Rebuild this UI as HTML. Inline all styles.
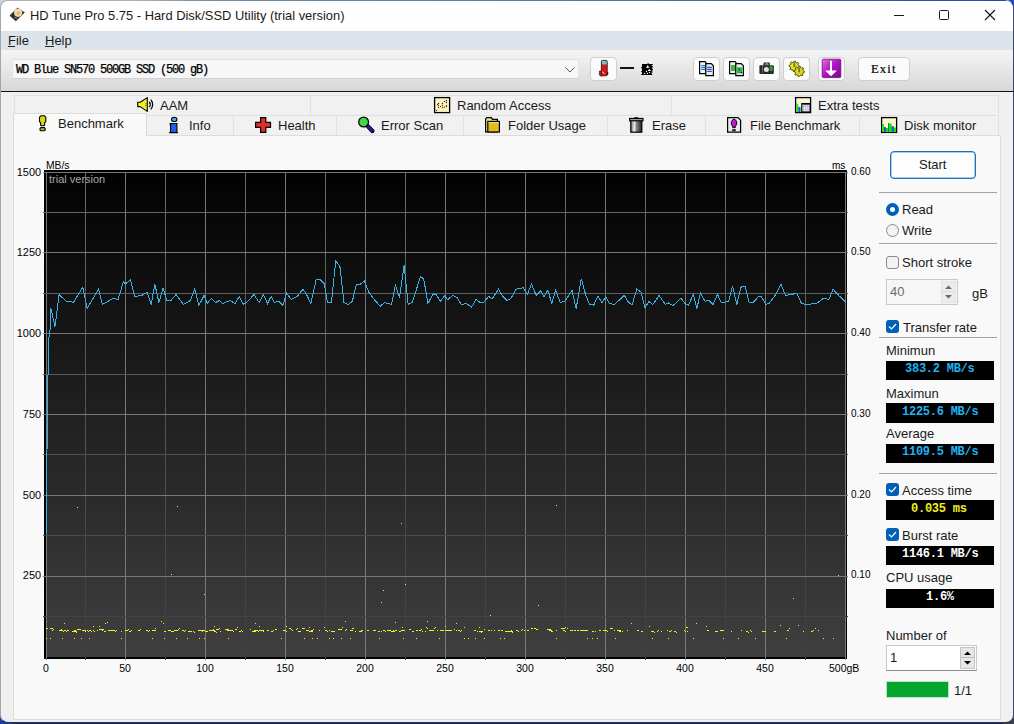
<!DOCTYPE html>
<html><head><meta charset="utf-8">
<style>
*{margin:0;padding:0;box-sizing:border-box}
html,body{width:1014px;height:724px;overflow:hidden}
body{position:relative;font-family:"Liberation Sans",sans-serif;color:#000;background:#1d2a55}
.a{position:absolute}
.t{position:absolute;white-space:nowrap;font-size:13px;line-height:15px;color:#1a1a1a}
#win{position:absolute;left:0;top:0;width:1014px;height:723px;background:#f0f0f0;border-radius:8px;overflow:hidden;border:1px solid #a4a6aa;border-right-color:#3c4666;border-bottom-color:#22305a}
.tab{position:absolute;background:#f1f1f1;border:1px solid #e0e0e0;border-bottom:none}
.tbtn{position:absolute;top:57px;height:24px;border:1px solid #cfcfcf;border-radius:4px;background:#fbfbfb}
.lbox{position:absolute;left:886px;width:108px;background:#000}
.mono{position:absolute;font-family:"Liberation Mono",monospace;font-weight:bold;white-space:nowrap;font-size:12px;line-height:12px;letter-spacing:-0.25px}
.sep{position:absolute;left:879px;width:118px;height:1px;background:#a3a3a3}
.cb{position:absolute;left:886px;width:13px;height:13px;border-radius:3px;background:#005fb8}
.ax{position:absolute;font-size:10.5px;line-height:12px;color:#000;white-space:nowrap}
</style></head><body>
<div class="a" style="left:0;top:0;width:12px;height:12px;background:#cfd1d4"></div>
<div class="a" style="right:0;top:0;width:12px;height:12px;background:#1f44c8"></div>
<div class="a" style="left:0;bottom:0;width:12px;height:12px;background:#1c3aa8"></div>
<div class="a" style="right:0;bottom:0;width:12px;height:12px;background:#3a3f4a"></div>
<div id="win">
 <div class="a" style="left:-1px;top:-1px;width:1014px;height:31px;background:#fefefe"></div>
 <div class="a" style="left:-1px;top:30px;width:1014px;height:19px;background:#dde3eb"></div>
 <div class="a" style="left:-1px;top:49px;width:1014px;height:41px;background:linear-gradient(#f5f5f5,#d7d7d7)"></div>
 <div class="a" style="left:-1px;top:90px;width:1014px;height:1px;background:#111"></div>
</div>

<!-- title -->
<div class="a" style="left:8px;top:0;width:998px;height:1px;background:linear-gradient(90deg,#aeb0b2 0%,#aeb0b2 13%,#6f8ea6 20%,#5a7a9e 55%,#2a48a4 100%)"></div>
<div class="t" style="left:30px;top:8px;font-size:12.9px">HD Tune Pro 5.75 - Hard Disk/SSD Utility (trial version)</div>
<!-- window controls -->
<div class="a" style="left:894px;top:15px;width:10px;height:1px;background:#1a1a1a"></div>
<div class="a" style="left:939px;top:10px;width:10px;height:10px;border:1px solid #1a1a1a;border-radius:1.5px"></div>
<svg class="a" style="left:984px;top:9px" width="12" height="12" viewBox="0 0 12 12"><path d="M1,1 L11,11 M11,1 L1,11" stroke="#111" stroke-width="1.1"/></svg>

<!-- menu -->
<div class="t" style="left:8px;top:33px">File</div>
<div class="a" style="left:8px;top:46px;width:7px;height:1px;background:#222"></div>
<div class="t" style="left:45px;top:33px">Help</div>
<div class="a" style="left:45px;top:46px;width:9px;height:1px;background:#222"></div>

<!-- combobox -->
<div class="a" style="left:12px;top:59px;width:567px;height:20px;background:#f7f7f7;border:1px solid #e3e3e3;border-bottom-color:#d0d0d0"></div>
<div class="a" style="left:16px;top:63px;font-family:'Liberation Mono',monospace;font-size:12px;line-height:14px;letter-spacing:-1.2px;white-space:nowrap;color:#000;-webkit-text-stroke:0.25px #000">WD Blue SN570 500GB SSD (500 gB)</div>
<svg class="a" style="left:564px;top:66px" width="12" height="8" viewBox="0 0 12 8"><path d="M1.5,1.5 L6,6 L10.5,1.5" stroke="#555" stroke-width="1" fill="none"/></svg>

<!-- toolbar buttons -->
<div class="tbtn" style="left:590px;width:27px"></div>
<div class="a" style="left:620px;top:67px;width:14px;height:2px;background:#111"></div>
<div class="tbtn" style="left:693px;width:27px"></div>
<div class="tbtn" style="left:723px;width:27px"></div>
<div class="tbtn" style="left:753px;width:27px"></div>
<div class="tbtn" style="left:783px;width:27px"></div>
<div class="tbtn" style="left:818px;width:27px"></div>
<div class="tbtn" style="left:858px;width:52px"></div>
<div class="a" style="left:871px;top:62px;font-family:'Liberation Serif',serif;font-size:12.5px;line-height:14px;letter-spacing:1.2px;color:#000;-webkit-text-stroke:0.2px #000">Exit</div>

<!-- tabs row 1 -->
<div class="tab" style="left:14px;top:95px;width:297px;height:19px"></div>
<div class="tab" style="left:310px;top:95px;width:362px;height:19px"></div>
<div class="tab" style="left:671px;top:95px;width:328px;height:19px"></div>
<div class="t" style="left:160px;top:98px">AAM</div>
<div class="t" style="left:457px;top:98px">Random Access</div>
<div class="t" style="left:818px;top:98px">Extra tests</div>
<!-- tabs row 2 -->
<div class="tab" style="left:146px;top:115px;width:88px;height:21px"></div>
<div class="tab" style="left:233px;top:115px;width:104px;height:21px"></div>
<div class="tab" style="left:336px;top:115px;width:128px;height:21px"></div>
<div class="tab" style="left:463px;top:115px;width:145px;height:21px"></div>
<div class="tab" style="left:607px;top:115px;width:99px;height:21px"></div>
<div class="tab" style="left:705px;top:115px;width:155px;height:21px"></div>
<div class="tab" style="left:859px;top:115px;width:140px;height:21px"></div>
<!-- page -->
<div class="a" style="left:13px;top:135px;width:988px;height:585px;background:#f9f9f9;border:1px solid #dcdcdc"></div>
<!-- selected tab -->
<div class="a" style="left:13px;top:113px;width:134px;height:24px;background:#f9f9f9;border:1px solid #dcdcdc;border-bottom:none"></div>
<div class="t" style="left:58px;top:116px">Benchmark</div>
<div class="t" style="left:189px;top:118px">Info</div>
<div class="t" style="left:278px;top:118px">Health</div>
<div class="t" style="left:381px;top:118px">Error Scan</div>
<div class="t" style="left:508px;top:118px">Folder Usage</div>
<div class="t" style="left:652px;top:118px">Erase</div>
<div class="t" style="left:750px;top:118px">File Benchmark</div>
<div class="t" style="left:904px;top:118px">Disk monitor</div>

<!-- chart -->
<svg class="a" style="left:0;top:0" width="1014" height="724" viewBox="0 0 1014 724">
 <defs><linearGradient id="cg" x1="0" y1="0" x2="0" y2="1"><stop offset="0" stop-color="#020202"/><stop offset="1" stop-color="#3f3f3f"/></linearGradient><linearGradient id="mg" gradientUnits="userSpaceOnUse" x1="0" y1="172" x2="0" y2="657"><stop offset="0" stop-color="#6a6a6a"/><stop offset="1" stop-color="#3f3f3f"/></linearGradient></defs>
 <rect x="44" y="170" width="803" height="489" fill="#000"/>
 <rect x="46" y="172" width="800" height="485" fill="url(#cg)"/>
 <g stroke-width="1" shape-rendering="crispEdges" id="grid"><line x1="46.5" y1="172" x2="46.5" y2="660" stroke="#787878"/><line x1="85.5" y1="172" x2="85.5" y2="660" stroke="url(#mg)"/><line x1="125.5" y1="172" x2="125.5" y2="660" stroke="#787878"/><line x1="165.5" y1="172" x2="165.5" y2="660" stroke="url(#mg)"/><line x1="205.5" y1="172" x2="205.5" y2="660" stroke="#787878"/><line x1="245.5" y1="172" x2="245.5" y2="660" stroke="url(#mg)"/><line x1="285.5" y1="172" x2="285.5" y2="660" stroke="#787878"/><line x1="325.5" y1="172" x2="325.5" y2="660" stroke="url(#mg)"/><line x1="365.5" y1="172" x2="365.5" y2="660" stroke="#787878"/><line x1="405.5" y1="172" x2="405.5" y2="660" stroke="url(#mg)"/><line x1="445.5" y1="172" x2="445.5" y2="660" stroke="#787878"/><line x1="485.5" y1="172" x2="485.5" y2="660" stroke="url(#mg)"/><line x1="525.5" y1="172" x2="525.5" y2="660" stroke="#787878"/><line x1="565.5" y1="172" x2="565.5" y2="660" stroke="url(#mg)"/><line x1="605.5" y1="172" x2="605.5" y2="660" stroke="#787878"/><line x1="645.5" y1="172" x2="645.5" y2="660" stroke="url(#mg)"/><line x1="685.5" y1="172" x2="685.5" y2="660" stroke="#787878"/><line x1="725.5" y1="172" x2="725.5" y2="660" stroke="url(#mg)"/><line x1="765.5" y1="172" x2="765.5" y2="660" stroke="#787878"/><line x1="805.5" y1="172" x2="805.5" y2="660" stroke="url(#mg)"/><line x1="845.5" y1="172" x2="845.5" y2="660" stroke="#787878"/><line x1="43" y1="172.5" x2="848" y2="172.5" stroke="#787878"/><line x1="43" y1="212.5" x2="848" y2="212.5" stroke="#666666"/><line x1="43" y1="252.5" x2="848" y2="252.5" stroke="#787878"/><line x1="43" y1="293.5" x2="848" y2="293.5" stroke="#5f5f5f"/><line x1="43" y1="333.5" x2="848" y2="333.5" stroke="#787878"/><line x1="43" y1="374.5" x2="848" y2="374.5" stroke="#585858"/><line x1="43" y1="414.5" x2="848" y2="414.5" stroke="#787878"/><line x1="43" y1="454.5" x2="848" y2="454.5" stroke="#515151"/><line x1="43" y1="495.5" x2="848" y2="495.5" stroke="#787878"/><line x1="43" y1="535.5" x2="848" y2="535.5" stroke="#4a4a4a"/><line x1="43" y1="576.5" x2="848" y2="576.5" stroke="#787878"/><line x1="43" y1="616.5" x2="848" y2="616.5" stroke="#434343"/></g>
 <path d="M45.8,533.0 L46.5,450.0 L48.0,338.0 L49.3,335.0 L50.4,308.0 L54.5,326.0 L58.6,294.0 L65.9,301.0 L73.0,301.7 L82.4,286.6 L86.6,308.0 L98.0,288.7 L102.0,304.0 L112.5,298.0 L117.6,299.0 L122.8,281.4 L124.9,283.5 L130.0,279.3 L134.2,296.0 L141.4,294.9 L146.6,291.8 L150.8,304.0 L154.3,283.5 L158.4,302.0 L162.6,287.6 L166.3,300.0 L170.4,300.0 L175.6,294.0 L182.9,304.0 L190.0,300.0 L194.2,288.6 L198.4,305.0 L203.6,294.9 L206.7,303.0 L210.8,298.0 L215.0,302.0 L219.0,300.0 L222.2,303.0 L229.4,300.0 L234.6,303.0 L238.8,296.0 L243.0,304.0 L247.0,301.0 L253.5,294.0 L258.6,302.0 L262.8,294.0 L267.0,303.0 L270.6,296.0 L274.0,302.0 L278.3,300.5 L282.4,305.0 L286.0,292.8 L290.7,299.0 L297.0,295.5 L302.5,288.6 L306.0,294.0 L310.4,303.0 L315.6,279.3 L319.7,279.3 L323.8,283.5 L327.0,302.0 L331.0,302.0 L335.2,260.3 L339.4,266.0 L343.5,302.0 L347.7,304.0 L351.8,301.0 L356.0,283.5 L360.0,283.5 L363.8,280.4 L368.4,291.8 L374.6,300.0 L379.8,305.8 L383.9,302.0 L391.0,304.0 L394.9,285.0 L399.0,297.0 L403.6,264.8 L407.7,304.0 L411.8,302.0 L420.0,276.0 L423.2,278.3 L427.4,303.0 L432.5,293.4 L435.7,294.0 L439.8,301.0 L444.0,295.5 L447.2,299.0 L452.4,295.0 L456.6,297.0 L460.7,304.0 L465.9,303.0 L471.0,306.7 L475.6,299.0 L480.4,302.5 L483.5,301.7 L488.0,296.0 L491.8,298.0 L498.0,288.7 L502.0,295.5 L506.3,300.0 L510.4,298.0 L515.6,288.7 L522.8,287.2 L527.0,293.8 L531.0,283.5 L535.7,294.9 L540.4,290.0 L543.5,296.3 L547.2,289.7 L551.4,303.0 L555.0,289.7 L559.7,302.0 L564.2,301.0 L571.5,289.7 L575.6,308.3 L580.8,278.3 L585.0,293.8 L589.0,304.0 L593.2,304.6 L597.4,295.5 L601.5,302.5 L605.2,296.0 L608.7,303.0 L614.0,304.0 L623.8,294.9 L627.4,301.0 L631.5,304.6 L636.3,288.7 L640.4,291.3 L644.6,307.3 L648.3,301.0 L652.4,304.0 L658.6,295.0 L664.8,304.0 L668.0,302.5 L672.7,305.0 L680.4,297.6 L684.5,303.0 L688.0,304.6 L692.8,294.0 L696.3,308.0 L700.0,292.8 L704.6,301.0 L708.3,299.6 L712.5,304.0 L717.0,294.0 L720.7,302.0 L728.0,301.0 L732.1,285.5 L736.3,304.0 L740.4,286.6 L744.6,286.0 L748.7,302.0 L752.8,302.0 L758.0,296.0 L761.0,296.3 L765.3,303.8 L768.4,303.0 L774.6,295.0 L780.4,283.5 L785.0,295.0 L790.7,294.0 L796.3,292.8 L801.0,303.0 L805.6,304.0 L816.0,303.0 L823.2,297.6 L828.4,299.0 L832.5,288.7 L838.8,295.5 L845.0,301.7" fill="none" stroke="#3cb0e2" stroke-width="1" shape-rendering="crispEdges" transform="translate(0.5,0.5)"/>
 <g fill="#f2f222" shape-rendering="crispEdges"><rect x="46" y="628" width="2" height="1"/><rect x="50" y="628" width="3" height="1"/><rect x="52" y="630" width="1" height="1"/><rect x="53" y="629" width="1" height="1"/><rect x="59" y="630" width="2" height="1"/><rect x="61" y="629" width="1" height="1"/><rect x="61" y="630" width="2" height="1"/><rect x="63" y="631" width="1" height="1"/><rect x="64" y="630" width="2" height="1"/><rect x="66" y="631" width="1" height="1"/><rect x="67" y="630" width="2" height="1"/><rect x="72" y="631" width="4" height="1"/><rect x="76" y="632" width="1" height="1"/><rect x="74" y="630" width="2" height="1"/><rect x="76" y="631" width="1" height="1"/><rect x="77" y="629" width="4" height="1"/><rect x="79" y="629" width="2" height="1"/><rect x="82" y="630" width="4" height="1"/><rect x="85" y="631" width="1" height="1"/><rect x="87" y="630" width="1" height="1"/><rect x="88" y="631" width="1" height="1"/><rect x="89" y="630" width="2" height="1"/><rect x="91" y="631" width="1" height="1"/><rect x="93" y="630" width="1" height="1"/><rect x="94" y="631" width="1" height="1"/><rect x="97" y="630" width="1" height="1"/><rect x="99" y="629" width="4" height="1"/><rect x="102" y="630" width="1" height="1"/><rect x="103" y="629" width="1" height="1"/><rect x="104" y="631" width="2" height="1"/><rect x="108" y="630" width="4" height="1"/><rect x="110" y="630" width="4" height="1"/><rect x="112" y="630" width="3" height="1"/><rect x="115" y="631" width="1" height="1"/><rect x="116" y="630" width="1" height="1"/><rect x="121" y="631" width="1" height="1"/><rect x="125" y="630" width="3" height="1"/><rect x="127" y="630" width="1" height="1"/><rect x="128" y="629" width="1" height="1"/><rect x="129" y="631" width="2" height="1"/><rect x="131" y="630" width="1" height="1"/><rect x="131" y="630" width="1" height="1"/><rect x="138" y="630" width="2" height="1"/><rect x="140" y="629" width="1" height="1"/><rect x="146" y="630" width="2" height="1"/><rect x="148" y="631" width="1" height="1"/><rect x="149" y="630" width="1" height="1"/><rect x="152" y="630" width="4" height="1"/><rect x="155" y="628" width="1" height="1"/><rect x="164" y="631" width="2" height="1"/><rect x="168" y="630" width="3" height="1"/><rect x="171" y="631" width="1" height="1"/><rect x="171" y="631" width="3" height="1"/><rect x="174" y="630" width="2" height="1"/><rect x="176" y="630" width="2" height="1"/><rect x="178" y="629" width="1" height="1"/><rect x="179" y="628" width="1" height="1"/><rect x="182" y="630" width="2" height="1"/><rect x="184" y="631" width="1" height="1"/><rect x="185" y="630" width="1" height="1"/><rect x="188" y="631" width="4" height="1"/><rect x="193" y="631" width="1" height="1"/><rect x="194" y="632" width="1" height="1"/><rect x="198" y="630" width="4" height="1"/><rect x="202" y="631" width="1" height="1"/><rect x="201" y="630" width="4" height="1"/><rect x="205" y="631" width="3" height="1"/><rect x="209" y="630" width="4" height="1"/><rect x="213" y="629" width="1" height="1"/><rect x="212" y="630" width="3" height="1"/><rect x="214" y="631" width="2" height="1"/><rect x="216" y="632" width="1" height="1"/><rect x="216" y="629" width="3" height="1"/><rect x="219" y="628" width="1" height="1"/><rect x="220" y="631" width="1" height="1"/><rect x="225" y="629" width="4" height="1"/><rect x="227" y="630" width="4" height="1"/><rect x="231" y="630" width="2" height="1"/><rect x="233" y="631" width="1" height="1"/><rect x="235" y="629" width="2" height="1"/><rect x="239" y="631" width="2" height="1"/><rect x="241" y="630" width="1" height="1"/><rect x="242" y="631" width="1" height="1"/><rect x="250" y="629" width="1" height="1"/><rect x="252" y="631" width="4" height="1"/><rect x="254" y="630" width="2" height="1"/><rect x="256" y="630" width="2" height="1"/><rect x="258" y="631" width="1" height="1"/><rect x="259" y="630" width="4" height="1"/><rect x="263" y="631" width="1" height="1"/><rect x="263" y="630" width="1" height="1"/><rect x="267" y="630" width="2" height="1"/><rect x="271" y="631" width="2" height="1"/><rect x="273" y="630" width="1" height="1"/><rect x="275" y="629" width="2" height="1"/><rect x="283" y="630" width="3" height="1"/><rect x="286" y="631" width="1" height="1"/><rect x="289" y="628" width="2" height="1"/><rect x="291" y="629" width="1" height="1"/><rect x="292" y="630" width="1" height="1"/><rect x="296" y="629" width="1" height="1"/><rect x="297" y="628" width="1" height="1"/><rect x="298" y="631" width="3" height="1"/><rect x="302" y="628" width="3" height="1"/><rect x="306" y="630" width="3" height="1"/><rect x="309" y="631" width="4" height="1"/><rect x="311" y="630" width="2" height="1"/><rect x="313" y="629" width="1" height="1"/><rect x="319" y="630" width="1" height="1"/><rect x="325" y="630" width="2" height="1"/><rect x="327" y="631" width="1" height="1"/><rect x="329" y="630" width="1" height="1"/><rect x="331" y="631" width="4" height="1"/><rect x="333" y="631" width="2" height="1"/><rect x="338" y="629" width="4" height="1"/><rect x="345" y="630" width="1" height="1"/><rect x="346" y="629" width="1" height="1"/><rect x="350" y="630" width="3" height="1"/><rect x="352" y="628" width="2" height="1"/><rect x="355" y="631" width="1" height="1"/><rect x="359" y="631" width="3" height="1"/><rect x="361" y="630" width="2" height="1"/><rect x="367" y="630" width="2" height="1"/><rect x="373" y="630" width="3" height="1"/><rect x="378" y="631" width="2" height="1"/><rect x="381" y="631" width="1" height="1"/><rect x="383" y="630" width="2" height="1"/><rect x="385" y="631" width="1" height="1"/><rect x="387" y="630" width="3" height="1"/><rect x="389" y="630" width="2" height="1"/><rect x="391" y="631" width="1" height="1"/><rect x="391" y="631" width="2" height="1"/><rect x="393" y="630" width="1" height="1"/><rect x="393" y="631" width="2" height="1"/><rect x="395" y="630" width="1" height="1"/><rect x="396" y="630" width="1" height="1"/><rect x="399" y="631" width="2" height="1"/><rect x="401" y="630" width="2" height="1"/><rect x="403" y="630" width="2" height="1"/><rect x="409" y="629" width="2" height="1"/><rect x="412" y="631" width="2" height="1"/><rect x="416" y="630" width="2" height="1"/><rect x="419" y="630" width="2" height="1"/><rect x="421" y="629" width="1" height="1"/><rect x="422" y="631" width="1" height="1"/><rect x="425" y="631" width="1" height="1"/><rect x="427" y="628" width="1" height="1"/><rect x="429" y="630" width="4" height="1"/><rect x="432" y="630" width="2" height="1"/><rect x="434" y="628" width="1" height="1"/><rect x="435" y="627" width="1" height="1"/><rect x="437" y="630" width="1" height="1"/><rect x="440" y="630" width="3" height="1"/><rect x="443" y="630" width="1" height="1"/><rect x="445" y="630" width="4" height="1"/><rect x="448" y="630" width="3" height="1"/><rect x="450" y="630" width="2" height="1"/><rect x="454" y="629" width="1" height="1"/><rect x="456" y="630" width="1" height="1"/><rect x="458" y="630" width="2" height="1"/><rect x="460" y="631" width="1" height="1"/><rect x="461" y="630" width="1" height="1"/><rect x="474" y="630" width="2" height="1"/><rect x="477" y="631" width="1" height="1"/><rect x="479" y="631" width="2" height="1"/><rect x="481" y="632" width="1" height="1"/><rect x="481" y="631" width="2" height="1"/><rect x="484" y="629" width="1" height="1"/><rect x="488" y="630" width="2" height="1"/><rect x="491" y="630" width="1" height="1"/><rect x="494" y="630" width="1" height="1"/><rect x="498" y="630" width="2" height="1"/><rect x="501" y="630" width="2" height="1"/><rect x="505" y="631" width="4" height="1"/><rect x="508" y="631" width="4" height="1"/><rect x="512" y="632" width="1" height="1"/><rect x="511" y="630" width="1" height="1"/><rect x="512" y="631" width="1" height="1"/><rect x="516" y="630" width="2" height="1"/><rect x="518" y="631" width="1" height="1"/><rect x="521" y="630" width="1" height="1"/><rect x="522" y="629" width="1" height="1"/><rect x="524" y="630" width="1" height="1"/><rect x="527" y="630" width="2" height="1"/><rect x="531" y="628" width="2" height="1"/><rect x="534" y="628" width="2" height="1"/><rect x="536" y="629" width="2" height="1"/><rect x="547" y="629" width="4" height="1"/><rect x="551" y="630" width="1" height="1"/><rect x="549" y="630" width="3" height="1"/><rect x="551" y="631" width="2" height="1"/><rect x="556" y="630" width="1" height="1"/><rect x="561" y="628" width="4" height="1"/><rect x="565" y="627" width="1" height="1"/><rect x="563" y="630" width="2" height="1"/><rect x="565" y="631" width="1" height="1"/><rect x="567" y="628" width="1" height="1"/><rect x="570" y="630" width="3" height="1"/><rect x="574" y="630" width="2" height="1"/><rect x="577" y="630" width="2" height="1"/><rect x="580" y="630" width="4" height="1"/><rect x="584" y="630" width="4" height="1"/><rect x="592" y="631" width="2" height="1"/><rect x="595" y="631" width="1" height="1"/><rect x="599" y="630" width="2" height="1"/><rect x="603" y="630" width="4" height="1"/><rect x="607" y="631" width="1" height="1"/><rect x="610" y="628" width="3" height="1"/><rect x="614" y="630" width="1" height="1"/><rect x="617" y="630" width="4" height="1"/><rect x="619" y="631" width="2" height="1"/><rect x="622" y="631" width="1" height="1"/><rect x="627" y="630" width="1" height="1"/><rect x="637" y="630" width="2" height="1"/><rect x="641" y="631" width="2" height="1"/><rect x="651" y="631" width="3" height="1"/><rect x="654" y="632" width="1" height="1"/><rect x="657" y="631" width="1" height="1"/><rect x="658" y="630" width="1" height="1"/><rect x="661" y="631" width="1" height="1"/><rect x="667" y="630" width="1" height="1"/><rect x="669" y="631" width="2" height="1"/><rect x="671" y="630" width="1" height="1"/><rect x="674" y="631" width="2" height="1"/><rect x="676" y="632" width="1" height="1"/><rect x="684" y="630" width="1" height="1"/><rect x="685" y="631" width="1" height="1"/><rect x="687" y="631" width="1" height="1"/><rect x="707" y="630" width="2" height="1"/><rect x="715" y="631" width="3" height="1"/><rect x="720" y="630" width="2" height="1"/><rect x="722" y="630" width="2" height="1"/><rect x="731" y="631" width="1" height="1"/><rect x="741" y="630" width="1" height="1"/><rect x="746" y="631" width="2" height="1"/><rect x="748" y="632" width="1" height="1"/><rect x="750" y="630" width="1" height="1"/><rect x="751" y="631" width="1" height="1"/><rect x="762" y="631" width="4" height="1"/><rect x="774" y="631" width="2" height="1"/><rect x="787" y="630" width="2" height="1"/><rect x="789" y="628" width="1" height="1"/><rect x="803" y="631" width="1" height="1"/><rect x="811" y="631" width="2" height="1"/><rect x="813" y="630" width="1" height="1"/><rect x="815" y="628" width="1" height="1"/><rect x="818" y="630" width="1" height="1"/><rect x="46" y="638" width="1" height="1"/><rect x="50" y="638" width="1" height="1"/><rect x="62" y="638" width="1" height="1"/><rect x="74" y="638" width="1" height="1"/><rect x="81" y="638" width="1" height="1"/><rect x="89" y="638" width="1" height="1"/><rect x="121" y="638" width="1" height="1"/><rect x="152" y="638" width="1" height="1"/><rect x="164" y="638" width="1" height="1"/><rect x="176" y="638" width="1" height="1"/><rect x="187" y="638" width="1" height="1"/><rect x="199" y="638" width="1" height="1"/><rect x="204" y="638" width="1" height="1"/><rect x="228" y="638" width="1" height="1"/><rect x="281" y="638" width="1" height="1"/><rect x="304" y="638" width="1" height="1"/><rect x="312" y="638" width="1" height="1"/><rect x="317" y="638" width="1" height="1"/><rect x="329" y="638" width="1" height="1"/><rect x="333" y="638" width="1" height="1"/><rect x="341" y="638" width="1" height="1"/><rect x="350" y="638" width="1" height="1"/><rect x="379" y="638" width="1" height="1"/><rect x="403" y="638" width="1" height="1"/><rect x="416" y="638" width="1" height="1"/><rect x="439" y="638" width="1" height="1"/><rect x="464" y="638" width="1" height="1"/><rect x="468" y="638" width="1" height="1"/><rect x="475" y="638" width="1" height="1"/><rect x="484" y="638" width="1" height="1"/><rect x="500" y="638" width="1" height="1"/><rect x="504" y="638" width="1" height="1"/><rect x="556" y="638" width="1" height="1"/><rect x="587" y="638" width="1" height="1"/><rect x="592" y="638" width="1" height="1"/><rect x="597" y="638" width="1" height="1"/><rect x="615" y="638" width="1" height="1"/><rect x="652" y="638" width="1" height="1"/><rect x="668" y="638" width="1" height="1"/><rect x="693" y="638" width="1" height="1"/><rect x="723" y="638" width="1" height="1"/><rect x="738" y="638" width="1" height="1"/><rect x="755" y="638" width="1" height="1"/><rect x="786" y="638" width="1" height="1"/><rect x="823" y="638" width="1" height="1"/><rect x="833" y="638" width="1" height="1"/><rect x="402" y="627" width="1" height="1"/><rect x="456" y="623" width="1" height="1"/><rect x="309" y="627" width="1" height="1"/><rect x="426" y="627" width="1" height="1"/><rect x="237" y="627" width="1" height="1"/><rect x="259" y="626" width="1" height="1"/><rect x="631" y="623" width="1" height="1"/><rect x="706" y="626" width="1" height="1"/><rect x="687" y="627" width="1" height="1"/><rect x="214" y="626" width="1" height="1"/><rect x="255" y="623" width="1" height="1"/><rect x="686" y="627" width="1" height="1"/><rect x="286" y="626" width="1" height="1"/><rect x="64" y="623" width="1" height="1"/><rect x="649" y="626" width="1" height="1"/><rect x="324" y="627" width="1" height="1"/><rect x="479" y="627" width="1" height="1"/><rect x="696" y="623" width="1" height="1"/><rect x="445" y="626" width="1" height="1"/><rect x="99" y="626" width="1" height="1"/><rect x="780" y="625" width="1" height="1"/><rect x="93" y="626" width="1" height="1"/><rect x="342" y="627" width="1" height="1"/><rect x="798" y="625" width="1" height="1"/><rect x="464" y="627" width="1" height="1"/><rect x="77" y="507" width="1" height="1"/><rect x="177" y="506" width="1" height="1"/><rect x="401" y="523" width="1" height="1"/><rect x="171" y="574" width="1" height="1"/><rect x="204" y="594" width="1" height="1"/><rect x="383" y="590" width="1" height="1"/><rect x="405" y="584" width="1" height="1"/><rect x="381" y="602" width="1" height="1"/><rect x="161" y="621" width="1" height="1"/><rect x="345" y="621" width="1" height="1"/><rect x="107" y="622" width="1" height="1"/><rect x="427" y="621" width="1" height="1"/><rect x="395" y="622" width="1" height="1"/><rect x="556" y="505" width="1" height="1"/><rect x="490" y="615" width="1" height="1"/><rect x="538" y="605" width="1" height="1"/><rect x="793" y="598" width="1" height="1"/><rect x="838" y="575" width="1" height="1"/><rect x="163" y="623" width="1" height="1"/><rect x="105" y="623" width="1" height="1"/></g>
</svg>
<div class="ax" style="left:46px;top:160px;font-size:10.3px">MB/s</div>
<div class="ax" style="left:49px;top:173px;font-size:11px;color:#a8a8a8">trial version</div>
<div class="ax" style="left:832px;top:160px;font-size:10px">ms</div>
<div class="ax" style="right:973px;top:165.5px;text-align:right;font-size:10.9px">1500</div><div class="ax" style="left:851px;top:165.5px;font-size:10px">0.60</div><div class="ax" style="right:973px;top:246.3px;text-align:right;font-size:10.9px">1250</div><div class="ax" style="left:851px;top:246.3px;font-size:10px">0.50</div><div class="ax" style="right:973px;top:327.0px;text-align:right;font-size:10.9px">1000</div><div class="ax" style="left:851px;top:327.0px;font-size:10px">0.40</div><div class="ax" style="right:973px;top:407.8px;text-align:right;font-size:10.9px">750</div><div class="ax" style="left:851px;top:407.8px;font-size:10px">0.30</div><div class="ax" style="right:973px;top:488.5px;text-align:right;font-size:10.9px">500</div><div class="ax" style="left:851px;top:488.5px;font-size:10px">0.20</div><div class="ax" style="right:973px;top:569.3px;text-align:right;font-size:10.9px">250</div><div class="ax" style="left:851px;top:569.3px;font-size:10px">0.10</div><div class="ax" style="left:16px;width:60px;text-align:center;top:662px">0</div><div class="ax" style="left:95px;width:60px;text-align:center;top:662px">50</div><div class="ax" style="left:175px;width:60px;text-align:center;top:662px">100</div><div class="ax" style="left:255px;width:60px;text-align:center;top:662px">150</div><div class="ax" style="left:335px;width:60px;text-align:center;top:662px">200</div><div class="ax" style="left:415px;width:60px;text-align:center;top:662px">250</div><div class="ax" style="left:495px;width:60px;text-align:center;top:662px">300</div><div class="ax" style="left:575px;width:60px;text-align:center;top:662px">350</div><div class="ax" style="left:655px;width:60px;text-align:center;top:662px">400</div><div class="ax" style="left:735px;width:60px;text-align:center;top:662px">450</div><div class="ax" style="left:829px;top:662px">500gB</div>

<!-- right panel -->
<div class="a" style="left:890px;top:151px;width:86px;height:28px;border:1px solid #1f6fbf;border-radius:4px;background:#fdfdfd;box-shadow:inset 0 0 0 0.5px #5a9ad8"></div>
<div class="t" style="left:919px;top:157px">Start</div>
<div class="sep" style="top:192px"></div>
<div class="a" style="left:886px;top:203px;width:13px;height:13px;border-radius:50%;background:#005fb8"></div>
<div class="a" style="left:890px;top:207px;width:5px;height:5px;border-radius:50%;background:#fff"></div>
<div class="t" style="left:902px;top:202px">Read</div>
<div class="a" style="left:886px;top:224px;width:13px;height:13px;border-radius:50%;background:#f3f3f3;border:1px solid #8a8a8a"></div>
<div class="t" style="left:902px;top:223px">Write</div>
<div class="sep" style="top:243px"></div>
<div class="a" style="left:886px;top:256px;width:13px;height:13px;border-radius:3px;background:#f3f3f3;border:1px solid #8a8a8a"></div>
<div class="t" style="left:902px;top:255px">Short stroke</div>
<div class="a" style="left:886px;top:279px;width:72px;height:26px;background:#f6f6f6;border:1px solid #c8c8c8"></div>
<div class="a" style="left:941px;top:281px;width:15px;height:22px;background:#ececec;border:1px solid #e2e2e2"></div>
<div class="a" style="left:942px;top:291px;width:13px;height:1px;background:#d8d8d8"></div>
<svg class="a" style="left:944px;top:284px" width="9" height="16" viewBox="0 0 9 16"><path d="M1,5 L4.5,1.5 L8,5Z M1,11 L4.5,14.5 L8,11Z" fill="#6a6a6a"/></svg>
<div class="t" style="left:890px;top:284px;color:#6d6d6d">40</div>
<div class="t" style="left:972px;top:286px">gB</div>
<div class="cb" style="top:320px"></div>
<svg class="a" style="left:886px;top:320px" width="13" height="13" viewBox="0 0 13 13"><path d="M3,6.5 L5.5,9 L10,4" stroke="#fff" stroke-width="1.2" fill="none"/></svg>
<div class="t" style="left:903px;top:320px">Transfer rate</div>
<div class="sep" style="top:337px"></div>
<div class="t" style="left:886px;top:343px">Minimun</div>
<div class="lbox" style="top:361px;height:19px"></div>
<div class="mono" style="left:905px;top:363px;color:#22b2f0">383.2 MB/s</div>
<div class="t" style="left:886px;top:386px">Maximun</div>
<div class="lbox" style="top:403px;height:20px"></div>
<div class="mono" style="left:902px;top:406px;color:#22b2f0">1225.6 MB/s</div>
<div class="t" style="left:886px;top:426px">Average</div>
<div class="lbox" style="top:444px;height:19px"></div>
<div class="mono" style="left:902px;top:446px;color:#22b2f0">1109.5 MB/s</div>
<div class="sep" style="top:473px"></div>
<div class="cb" style="top:483px"></div>
<svg class="a" style="left:886px;top:483px" width="13" height="13" viewBox="0 0 13 13"><path d="M3,6.5 L5.5,9 L10,4" stroke="#fff" stroke-width="1.2" fill="none"/></svg>
<div class="t" style="left:902px;top:483px">Access time</div>
<div class="lbox" style="top:500px;height:20px"></div>
<div class="mono" style="left:911px;top:503px;color:#f0f020">0.035 ms</div>
<div class="cb" style="top:528px"></div>
<svg class="a" style="left:886px;top:528px" width="13" height="13" viewBox="0 0 13 13"><path d="M3,6.5 L5.5,9 L10,4" stroke="#fff" stroke-width="1.2" fill="none"/></svg>
<div class="t" style="left:902px;top:528px">Burst rate</div>
<div class="lbox" style="top:546px;height:19px"></div>
<div class="mono" style="left:902px;top:548px;color:#fff">1146.1 MB/s</div>
<div class="t" style="left:886px;top:570px">CPU usage</div>
<div class="lbox" style="top:589px;height:19px"></div>
<div class="mono" style="left:926px;top:591px;color:#fff">1.6%</div>
<div class="t" style="left:886px;top:628px">Number of</div>
<div class="a" style="left:886px;top:645px;width:91px;height:26px;background:#fff;border:1px solid #c9c9c9;border-bottom:1px solid #8a8a8a"></div>
<div class="a" style="left:960px;top:647px;width:15px;height:22px;background:#e6e6e6;border:1px solid #c4c4c4"></div>
<div class="a" style="left:961px;top:657px;width:13px;height:1px;background:#bdbdbd"></div>
<svg class="a" style="left:963px;top:650px" width="9" height="16" viewBox="0 0 9 16"><path d="M1,5 L4.5,1.5 L8,5Z M1,11 L4.5,14.5 L8,11Z" fill="#000"/></svg>
<div class="t" style="left:890px;top:650px">1</div>
<div class="a" style="left:886px;top:681px;width:63px;height:17px;background:#06a62e;border:1px solid #bfe0c8"></div>
<div class="t" style="left:954px;top:683px">1/1</div>

<!-- app icon -->
<svg class="a" style="left:6px;top:4px" width="20" height="20" viewBox="0 0 20 20">
 <path d="M11.5,4 L18.5,8.5 L9.8,17 L3.8,11.6 Z" fill="#2b2b2b" stroke="#444" stroke-width="0.6"/>
 <circle cx="12.1" cy="8.8" r="4.1" fill="#eed9ae"/>
 <circle cx="12.4" cy="9.3" r="1.7" fill="#e2b080"/>
 <path d="M8.5,13 L11,14.5" stroke="#888" stroke-width="1.2"/>
</svg>
<!-- AAM speaker -->
<svg class="a" style="left:135px;top:95px" width="20" height="20" viewBox="0 0 20 20">
 <path d="M2.7,7.2 L5.2,7.2 L12.3,2.6 L12.3,16.4 L5.2,11.6 L2.7,11.6 Z" fill="#f2ef22" stroke="#000" stroke-width="1.1" stroke-linejoin="round"/>
 <path d="M10.8,8.5 v0.6 M10.8,10.2 v0.6" stroke="#000" stroke-width="1"/>
 <path d="M14.3,6.8 Q16.4,9.5 14.3,12.2" stroke="#000" stroke-width="1.2" fill="none"/>
 <path d="M15.8,4.6 Q19.6,9.5 15.8,14.4" stroke="#000" stroke-width="1.2" fill="none"/>
</svg>
<!-- Random access -->
<svg class="a" style="left:431px;top:95px" width="20" height="20" viewBox="0 0 20 20">
 <rect x="3.6" y="2.6" width="15" height="15" fill="#fcf6c4" stroke="#000" stroke-width="1.3"/>
 <g fill="#6b3a20"><circle cx="6.5" cy="9.5" r=".7"/><circle cx="7.5" cy="10.5" r=".7"/><circle cx="7.5" cy="12.5" r=".7"/><circle cx="9.5" cy="11.5" r=".7"/><circle cx="11.5" cy="10.5" r=".7"/><circle cx="11.5" cy="12.5" r=".7"/><circle cx="13.5" cy="12" r=".7"/><circle cx="15.5" cy="11.5" r=".7"/><circle cx="15.5" cy="10.5" r=".7"/><circle cx="5.5" cy="15.5" r=".7"/></g>
 <g fill="#222"><circle cx="7.5" cy="8.5" r=".7"/><circle cx="11.5" cy="8.5" r=".7"/><circle cx="13.5" cy="6.5" r=".7"/><circle cx="15.5" cy="5.5" r=".7"/><circle cx="15.5" cy="7.5" r=".7"/></g>
</svg>
<!-- Extra tests -->
<svg class="a" style="left:792px;top:95px" width="20" height="20" viewBox="0 0 20 20">
 <rect x="3.6" y="2.6" width="15" height="15" fill="#fbf8d0" stroke="#000" stroke-width="1.3"/>
 <rect x="4.2" y="9" width="2" height="8" fill="#1ee61e"/>
 <rect x="6.2" y="12" width="2.2" height="5" fill="#2a5ad0"/>
 <rect x="8.4" y="13" width="1" height="4" fill="#1ee61e"/>
 <rect x="9.8" y="8.6" width="8.3" height="8.4" fill="#fff" stroke="#000" stroke-width="1.2"/>
 <rect x="10.4" y="9.2" width="7.2" height="1" fill="#2020a0"/>
 <g fill="#5a2a6a"><circle cx="11.8" cy="11.8" r=".6"/><circle cx="13.9" cy="11.8" r=".6"/><circle cx="16" cy="11.8" r=".6"/><circle cx="11.8" cy="14" r=".6"/><circle cx="13.9" cy="14" r=".6"/><circle cx="16" cy="14" r=".6"/><circle cx="11.8" cy="16" r=".6"/><circle cx="13.9" cy="16" r=".6"/><circle cx="16" cy="16" r=".6"/></g>
</svg>
<!-- Benchmark exclamation -->
<svg class="a" style="left:33px;top:113px" width="20" height="20" viewBox="0 0 20 20">
 <path d="M8,2.8 L11.5,2.8 L12.8,4.2 L12.8,8.6 L11.6,9.8 L11.6,12.2 L10.6,12.8 L8.6,12.8 L7.6,12.2 L7.6,9.8 L6.5,8.6 L6.5,4.2 Z" fill="#d8d812" stroke="#000" stroke-width="1.1"/>
 <path d="M7.8,14.6 L11.4,14.6 L12.2,15.6 L12.2,17 L11.4,17.8 L7.8,17.8 L7,17 L7,15.6 Z" fill="#b8c030" stroke="#000" stroke-width="1.1"/>
</svg>
<!-- Info -->
<svg class="a" style="left:164px;top:115px" width="20" height="20" viewBox="0 0 20 20">
 <ellipse cx="10.2" cy="4.4" rx="2.7" ry="2.1" fill="#3cb8ee" stroke="#000" stroke-width="1.1"/>
 <path d="M6.2,8.5 L12.9,8.5 L12.9,16.8 L13.4,17.6 L5.8,17.6 L6.6,16.6 L6.6,9.6 L6.2,9.6 Z" fill="#1f5fe8" stroke="#000" stroke-width="1.1"/>
</svg>
<!-- Health -->
<svg class="a" style="left:253px;top:115px" width="20" height="20" viewBox="0 0 20 20">
 <path d="M7.6,2.6 L12.8,2.6 L12.8,7.4 L17.5,7.4 L17.5,12.4 L12.8,12.4 L12.8,17.3 L7.6,17.3 L7.6,12.4 L2.6,12.4 L2.6,7.4 L7.6,7.4 Z" fill="#e32c2c" stroke="#000" stroke-width="1.2"/>
</svg>
<!-- Error scan -->
<svg class="a" style="left:355px;top:115px" width="20" height="20" viewBox="0 0 20 20">
 <path d="M12.2,10.6 L17.4,16" stroke="#000" stroke-width="4.2" stroke-linecap="round"/>
 <path d="M12.2,10.6 L17.4,16" stroke="#1c1cb0" stroke-width="2.4" stroke-linecap="round"/>
 <circle cx="8.6" cy="7" r="4.9" fill="#42d642" stroke="#000" stroke-width="1.2"/>
</svg>
<!-- Folder -->
<svg class="a" style="left:482px;top:115px" width="20" height="20" viewBox="0 0 20 20">
 <path d="M3.6,4.2 L4.8,2.6 L9.4,2.6 L10.4,4.4 L15.4,4.4 L15.4,16.8 L3.6,16.8 Z" fill="#eee28a" stroke="#000" stroke-width="1.2"/>
 <rect x="5.8" y="6.4" width="11.6" height="10.6" fill="#e2bc20" stroke="#000" stroke-width="1.2"/>
 <rect x="6.6" y="7.2" width="10" height="1" fill="#f4e48a"/>
</svg>
<!-- Erase trash -->
<svg class="a" style="left:626px;top:115px" width="20" height="20" viewBox="0 0 20 20">
 <defs><linearGradient id="tg" x1="0" x2="1"><stop offset="0" stop-color="#777"/><stop offset=".35" stop-color="#eee"/><stop offset=".5" stop-color="#888"/><stop offset="1" stop-color="#222"/></linearGradient></defs>
 <rect x="4.8" y="5.4" width="11" height="11.8" fill="url(#tg)" stroke="#000" stroke-width="1.2"/>
 <rect x="3.6" y="3.4" width="13.4" height="2.4" fill="#999" stroke="#000" stroke-width="1.1"/>
 <rect x="8.2" y="2.2" width="4" height="1.4" fill="#000"/>
</svg>
<!-- File benchmark -->
<svg class="a" style="left:724px;top:115px" width="20" height="20" viewBox="0 0 20 20">
 <path d="M3.6,2.6 L14,2.6 L16.6,5.2 L16.6,17.2 L3.6,17.2 Z" fill="#ececec" stroke="#000" stroke-width="1.2"/>
 <path d="M9,4.4 L11,4.4 L12.6,6.4 L12.6,9.6 L11.4,11.2 L11.4,12.4 L8.6,12.4 L8.6,11.2 L7.4,9.6 L7.4,6.4 Z" fill="#c018d0" stroke="#000" stroke-width="1"/>
 <path d="M8.6,14.6 Q10,13.8 11.4,14.6 L11.4,15.8 L8.6,15.8 Z" fill="#555" stroke="#000" stroke-width=".8"/>
</svg>
<!-- Disk monitor -->
<svg class="a" style="left:879px;top:115px" width="20" height="20" viewBox="0 0 20 20">
 <rect x="2.6" y="2.6" width="15" height="14.8" fill="#fbf6cc" stroke="#000" stroke-width="1.3"/>
 <path d="M3.2,9 L5,9 L5,12.2 L7,12.2 L7,13 L9.2,13 L9.2,8.4 L12.6,8.4 L12.6,11.6 L14.6,11.6 L14.6,12.6 L17,12.6 L17,16.8 L3.2,16.8 Z" fill="#12e412"/>
 <rect x="5" y="12.2" width="2" height="4.6" fill="#2850c8"/>
 <rect x="12.8" y="11.2" width="2" height="5.6" fill="#2850c8"/>
 <rect x="9" y="8" width="1" height="8.8" fill="#18806a"/>
</svg>
<!-- thermometer -->
<svg class="a" style="left:594px;top:59px" width="20" height="20" viewBox="0 0 20 20">
 <rect x="7.4" y="1.4" width="5.8" height="15.4" rx="1.2" fill="#d01818" stroke="#4a0a0a" stroke-width="0.9"/>
 <rect x="7.9" y="1.9" width="4.8" height="3.6" fill="#5cd0c8"/>
 <path d="M5.4,12 L7.4,12 L7.4,17.4 L5.4,16 Z" fill="#d01818" stroke="#4a0a0a" stroke-width=".7"/>
 <path d="M13.2,13 L14.2,13 L14.2,15.6 L13.2,16.4 Z" fill="#300" />
 <path d="M8.6,12.6 Q9,14.4 10.4,14.6" stroke="#fff" stroke-width="1" fill="none"/>
</svg>
<!-- weird glyph -->
<svg class="a" style="left:636px;top:59px" width="20" height="20" viewBox="0 0 20 20">
 <path d="M6,5 L11.5,5 L11.5,4.2 L12.8,4.2 L12.8,5 L16.8,5 L16.8,6 L15.8,6 L15.8,7 L16.8,7 L16.8,8.4 L15.8,8.4 L15.8,9.4 L16.8,9.4 L16.8,11.4 L15.8,11.4 L15.8,12.4 L16.6,12.4 L16.6,13.6 L15.6,13.6 L15.6,15 L16.2,15 L16.2,16 L5.2,16 L5.2,15 L6,15 L6,13 L5.2,13 L5.2,12 L6,12 L6,9.2 L5.2,9.2 L5.2,8 L6,8 Z" fill="#000"/>
 <path d="M10.2,8.4 L11.8,6 L12.8,8 L14,8.6 L10.6,9 Z" fill="#fff"/>
 <path d="M12,11.2 L13.4,10 L14.6,11.6 L15,12 L12.2,12 Z" fill="#fff"/>
 <circle cx="10.5" cy="12.5" r=".7" fill="#fff"/><circle cx="13.5" cy="13.4" r=".7" fill="#fff"/><circle cx="11.4" cy="14.4" r=".7" fill="#fff"/><circle cx="8.5" cy="14.4" r=".6" fill="#fff"/>
</svg>
<!-- copy docs -->
<svg class="a" style="left:696px;top:59px" width="20" height="20" viewBox="0 0 20 20">
 <path d="M3.6,2.6 L9.2,2.6 L10,3.4 L10,14.6 L3.6,14.6 Z" fill="#eaf6ff" stroke="#000" stroke-width="1.2"/>
 <path d="M5.2,6.5 h4.2 M5.2,8.4 h4.2 M5.2,10.4 h4.2" stroke="#2a78c8" stroke-width="1.1"/>
 <path d="M9.8,4.6 L15.2,4.6 L17.4,6.8 L17.4,16.6 L9.8,16.6 Z" fill="#e8eef6" stroke="#000" stroke-width="1.2"/>
 <path d="M11.2,8.4 h4.6 M11.2,10.4 h4.6 M11.2,12.4 h4.6" stroke="#2a5ac0" stroke-width="1.1"/>
</svg>
<svg class="a" style="left:726px;top:59px" width="20" height="20" viewBox="0 0 20 20">
 <path d="M3.6,2.6 L9.2,2.6 L10,3.4 L10,14.6 L3.6,14.6 Z" fill="#eaf6ff" stroke="#000" stroke-width="1.2"/>
 <rect x="5" y="6" width="4.4" height="6" fill="#3cb83c"/>
 <path d="M9.8,4.6 L15.2,4.6 L17.4,6.8 L17.4,16.6 L9.8,16.6 Z" fill="#e8eef6" stroke="#000" stroke-width="1.2"/>
 <rect x="11" y="8.2" width="5.4" height="6.2" fill="#3cb83c"/>
 <circle cx="13.4" cy="10.6" r="1" fill="#064"/>
 <circle cx="15.4" cy="13.4" r=".7" fill="#000"/>
</svg>
<!-- camera -->
<svg class="a" style="left:756px;top:59px" width="20" height="20" viewBox="0 0 20 20">
 <rect x="3.4" y="6.2" width="14.4" height="8.8" rx="1" fill="#2a2a2a"/>
 <path d="M7.2,6.4 L7.8,3.6 L13.6,3.6 L14,6.4 Z" fill="#2a2a2a"/>
 <path d="M8.8,5.6 L9.6,4.4 L12,4.4 L12.8,5.6 Z" fill="#ddd"/>
 <circle cx="10.4" cy="10.4" r="2.5" fill="#e2e2e2"/>
 <rect x="13.6" y="7" width="3" height="5" rx="1" fill="#2aa04a"/>
 <rect x="6" y="7" width=".8" height="7" fill="#777"/>
</svg>
<!-- gears -->
<svg class="a" style="left:786px;top:59px" width="20" height="20" viewBox="0 0 20 20">
 <path d="M13.50,7.20 L13.40,8.21 L12.00,8.73 L11.63,9.42 L11.98,10.88 L11.19,11.52 L9.83,10.90 L9.08,11.12 L8.30,12.40 L7.29,12.30 L6.77,10.90 L6.08,10.53 L4.62,10.88 L3.98,10.09 L4.60,8.73 L4.38,7.98 L3.10,7.20 L3.20,6.19 L4.60,5.67 L4.97,4.98 L4.62,3.52 L5.41,2.88 L6.77,3.50 L7.52,3.28 L8.30,2.00 L9.31,2.10 L9.83,3.50 L10.52,3.87 L11.98,3.52 L12.62,4.31 L12.00,5.67 L12.22,6.42Z" fill="#e4e81a" stroke="#3a3a08" stroke-width="0.9" stroke-linejoin="round"/>
 <path d="M18.40,12.40 L18.30,13.41 L16.90,13.93 L16.53,14.62 L16.88,16.08 L16.09,16.72 L14.73,16.10 L13.98,16.32 L13.20,17.60 L12.19,17.50 L11.67,16.10 L10.98,15.73 L9.52,16.08 L8.88,15.29 L9.50,13.93 L9.28,13.18 L8.00,12.40 L8.10,11.39 L9.50,10.87 L9.87,10.18 L9.52,8.72 L10.31,8.08 L11.67,8.70 L12.42,8.48 L13.20,7.20 L14.21,7.30 L14.73,8.70 L15.42,9.07 L16.88,8.72 L17.52,9.51 L16.90,10.87 L17.12,11.62Z" fill="#dde016" stroke="#3a3a08" stroke-width="0.9" stroke-linejoin="round"/>
 <rect x="7.4" y="3.6" width="1.8" height="4.6" fill="#7a6a3a"/>
 <rect x="12.3" y="8.8" width="1.8" height="4.6" fill="#7a6a3a"/>
</svg>
<!-- purple download -->
<svg class="a" style="left:821px;top:57px" width="22" height="24" viewBox="0 0 22 24">
 <defs><linearGradient id="pg" x1="0" y1="0" x2="1" y2="1"><stop offset="0" stop-color="#e070e8"/><stop offset=".5" stop-color="#b010c0"/><stop offset="1" stop-color="#7a0a88"/></linearGradient></defs>
 <rect x="1.2" y="2.2" width="18.6" height="18.4" rx="1" fill="url(#pg)" stroke="#6a0a78" stroke-width=".8"/>
 <path d="M9,3.8 L11,3.8 L11,13.4 L16,13.4 L10,19.2 L4,13.4 L9,13.4 Z" fill="#fff"/>
</svg>

</body></html>
